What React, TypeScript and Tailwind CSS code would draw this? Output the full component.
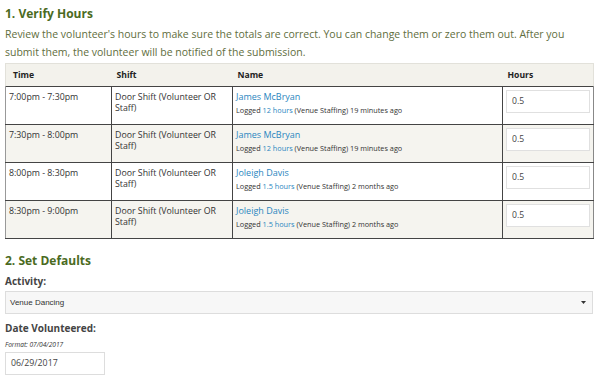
import React from "react";

const rows = [
  { time: "7:00pm - 7:30pm", name: "James McBryan", hours: "12 hours", ago: "19 minutes ago", bg: "bg-white" },
  { time: "7:30pm - 8:00pm", name: "James McBryan", hours: "12 hours", ago: "19 minutes ago", bg: "bg-[#f5f4ef]" },
  { time: "8:00pm - 8:30pm", name: "Joleigh Davis", hours: "1.5 hours", ago: "2 months ago", bg: "bg-white" },
  { time: "8:30pm - 9:00pm", name: "Joleigh Davis", hours: "1.5 hours", ago: "2 months ago", bg: "bg-[#f5f4ef]" },
];

export default function App() {
  return (
    <div className="w-[600px] h-[381px] bg-white px-[5px] pt-[6px] text-[#333] font-['Open_Sans',sans-serif] overflow-hidden">
      <h2 className="text-[12px] font-bold text-[#4b6b1f] leading-[16px]">1. Verify Hours</h2>
      <p className="mt-[3px] text-[10.5px] leading-[18px] text-[#5f6e40]">
        Review the volunteer's hours to make sure the totals are correct. You can change them or zero them out. After you submit them, the volunteer will be notified of the submission.
      </p>
      <table className="mt-[2px] w-[588px] border-collapse table-fixed">
        <colgroup>
          <col className="w-[106px]" />
          <col className="w-[121px]" />
          <col className="w-[270px]" />
          <col className="w-[91px]" />
        </colgroup>
        <thead>
          <tr className="bg-[#f3f2ec] h-[23px] border border-[#e2e1da]">
            <th className="text-left text-[8.6px] font-bold pl-[7px] pt-[1px] text-[#222]">Time</th>
            <th className="text-left text-[8.6px] font-bold pl-[5px] pt-[1px] text-[#222]">Shift</th>
            <th className="text-left text-[8.6px] font-bold pl-[5px] pt-[1px] text-[#222]">Name</th>
            <th className="text-left text-[8.6px] font-bold pl-[5px] pt-[1px] text-[#222]">Hours</th>
          </tr>
        </thead>
        <tbody>
          {rows.map((r, i) => (
            <tr key={i} className={`${r.bg} h-[38px]`}>
              <td className="align-top border border-[#444] border-l-[#999] pl-[3px] pt-[5px] text-[8.8px] leading-[11px]">{r.time}</td>
              <td className="align-top border border-[#444] pl-[3px] pt-[5px] text-[8.8px] leading-[11px]">Door Shift (Volunteer OR Staff)</td>
              <td className="align-top border border-[#444] pl-[3px] pt-[4px]">
                <div className="text-[9px] leading-[12px] text-[#2a86c0]">{r.name}</div>
                <div className="mt-[2px] text-[7.3px] leading-[10px] text-[#333]">
                  Logged <span className="text-[#2a86c0]">{r.hours}</span> (Venue Staffing) {r.ago}
                </div>
              </td>
              <td className="align-top border border-[#444] border-r-[#888] pl-[3px] pr-[3px] pt-[3px]">
                <div className="h-[23px] border border-[#e0e0e0] bg-white px-[5px] text-[8.6px] leading-[21px] text-[#444]">0.5</div>
              </td>
            </tr>
          ))}
        </tbody>
      </table>
      <h2 className="mt-[14px] text-[12px] font-bold text-[#4b6b1f] leading-[16px]">2. Set Defaults</h2>
      <div className="mt-[5px] text-[10px] font-bold text-[#444] leading-[14px]">Activity:</div>
      <div className="mt-[3px] w-[588px] h-[23px] border border-[#ddd] bg-[#f7f7f7] flex items-center justify-between pl-[4px] pr-[6px]">
        <span className="text-[8px] text-[#333] font-['Liberation_Sans',sans-serif]">Venue Dancing</span>
        <svg width="5" height="3" viewBox="0 0 5 3"><path d="M0 0h5L2.5 3z" fill="#333" /></svg>
      </div>
      <div className="mt-[7px] text-[10px] font-bold text-[#444] leading-[14px]">Date Volunteered:</div>
      <div className="mt-[5px] text-[6.6px] italic text-[#333] leading-[9px]">Format: 07/04/2017</div>
      <div className="mt-[3px] w-[100px] h-[23px] border border-[#ddd] bg-white px-[5px] text-[8.8px] leading-[21px] text-[#444]">06/29/2017</div>
    </div>
  );
}
